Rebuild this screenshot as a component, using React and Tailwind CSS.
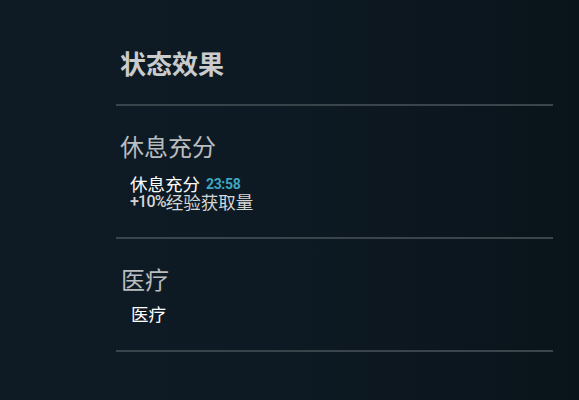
export default function App() {
  const font = { fontFamily: '"Noto Sans CJK SC", "Noto Sans", sans-serif' }
  return (
    <div
      className="h-[400px] w-[579px] overflow-hidden bg-gradient-to-r from-[#0e1b24] via-[#0e1a23] to-[#09131a]"
      style={font}
    >
      <div className="ml-[116px] w-[437px] pt-[49px]">
        <h2 className="h-[28px] pl-[4px] text-[26px] font-bold leading-[28px] text-[#c9cbcd]">状态效果</h2>
        <div className="mt-[27px] h-[2px] bg-[#3a444b]" />

        <section className="mt-[28px] pl-[4px]">
          <h3 className="h-[24px] text-[24px] leading-[24px] text-[#b9bdc0]">休息充分</h3>
          <div className="mt-[17px] pl-[10px]">
            <div className="flex h-[18px] items-center gap-[6px] text-[17.5px] leading-[18px] text-white">
              <span>休息充分</span>
              <span className="text-[14px] font-bold leading-[18px] tracking-tight text-[#3fa6bf] [font-family:Roboto,sans-serif]">
                23:58
              </span>
            </div>
            <div className="flex h-[18px] items-center text-[17.5px] leading-[18px] text-[#d4d6d8]">
              <span className="pl-[-1px] text-[16px] font-medium tracking-tighter [font-family:Roboto,sans-serif]">+10%</span>
              <span>经验获取量</span>
            </div>
          </div>
        </section>
        <div className="mt-[26px] h-[2px] bg-[#3a444b]" />

        <section className="mt-[28px] pl-[5px]">
          <h3 className="h-[24px] text-[24px] leading-[24px] text-[#b9bdc0]">医疗</h3>
          <div className="mt-[14px] h-[18px] pl-[10px] text-[17.5px] leading-[18px] text-white">医疗</div>
        </section>
        <div className="mt-[27px] h-[2px] bg-[#3a444b]" />
      </div>
    </div>
  )
}
